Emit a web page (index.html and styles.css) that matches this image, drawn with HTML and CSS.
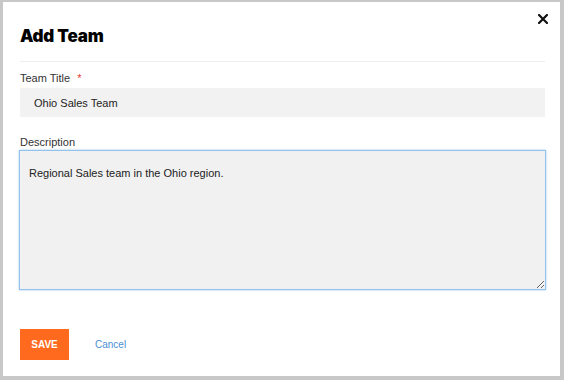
FILE: index.html
```html
<!DOCTYPE html>
<html lang="en">
<head>
  <meta charset="UTF-8" />
  <meta name="viewport" content="width=device-width, initial-scale=1" />
  <title>Add Team</title>
  <link rel="stylesheet" href="styles.css">
</head>
<body>
  <div class="modal">
    <button class="close-btn" aria-label="Close">
      <svg width="10" height="10" viewBox="0 0 10 10">
        <path d="M1 1 L9 9 M9 1 L1 9" stroke="#111" stroke-width="2.2" stroke-linecap="square" />
      </svg>
    </button>
    <h2 class="modal-title">Add Team</h2>
    <form class="team-form">
      <label class="field-label" for="teamTitle">Team Title <span class="required">*</span></label>
      <input id="teamTitle" class="text-input" type="text" value="Ohio Sales Team" />

      <label class="field-label desc-label" for="teamDesc">Description</label>
      <textarea id="teamDesc" class="text-area">Regional Sales team in the Ohio region.</textarea>

      <div class="form-actions">
        <button type="submit" class="save-btn">SAVE</button>
        <a href="#" class="cancel-link">Cancel</a>
      </div>
    </form>
  </div>
</body>
</html>
```

FILE: styles.css
```css
html, body {
  height: 100%;
}
body {
  margin: 0;
  background: #c8c8c8;
  font-family: "Liberation Sans", Arial, sans-serif;
  padding: 2px 4px 4px 3px;
  box-sizing: border-box;
}
.modal {
  position: relative;
  background: #fff;
  height: 100%;
  box-sizing: border-box;
  padding: 24px 15px 0 17px;
}
.close-btn {
  position: absolute;
  top: 12px;
  right: 12px;
  background: none;
  border: none;
  padding: 0;
  cursor: pointer;
  line-height: 0;
}
.modal-title {
  margin: 0;
  font-family: "Inter", sans-serif;
  font-weight: 900;
  font-size: 17px;
  color: #000;
  letter-spacing: -0.2px;
  padding-bottom: 15px;
  border-bottom: 1px solid #eeeeee;
}
.team-form {
  display: flex;
  flex-direction: column;
}
.field-label {
  font-size: 11px;
  color: #333;
  margin-top: 10px;
  margin-bottom: 4px;
}
.required {
  color: #e53935;
  margin-left: 4px;
}
.desc-label {
  margin-top: 19px;
  margin-bottom: 2px;
}
.text-input {
  height: 29px;
  box-sizing: border-box;
  border: none;
  background: #f2f2f2;
  padding: 0 14px;
  font-family: inherit;
  font-size: 11px;
  color: #222;
}
.text-area {
  height: 140px;
  box-sizing: border-box;
  border: 1px solid #94c2ee;
  box-shadow: 0 0 2px #9cc8f2;
  background: #f1f1f1;
  margin: 0 -1px;
  padding: 16px 9px;
  font-family: inherit;
  font-size: 11px;
  color: #222;
  resize: vertical;
  outline: none;
}
.form-actions {
  display: flex;
  align-items: center;
  gap: 26px;
  margin-top: 39px;
}
.save-btn {
  background: #ff6a1f;
  color: #fff;
  border: none;
  width: 49px;
  height: 31px;
  font-family: inherit;
  font-weight: bold;
  font-size: 10px;
  cursor: pointer;
}
.cancel-link {
  color: #4a8fd2;
  font-size: 10px;
  text-decoration: none;
}
```
